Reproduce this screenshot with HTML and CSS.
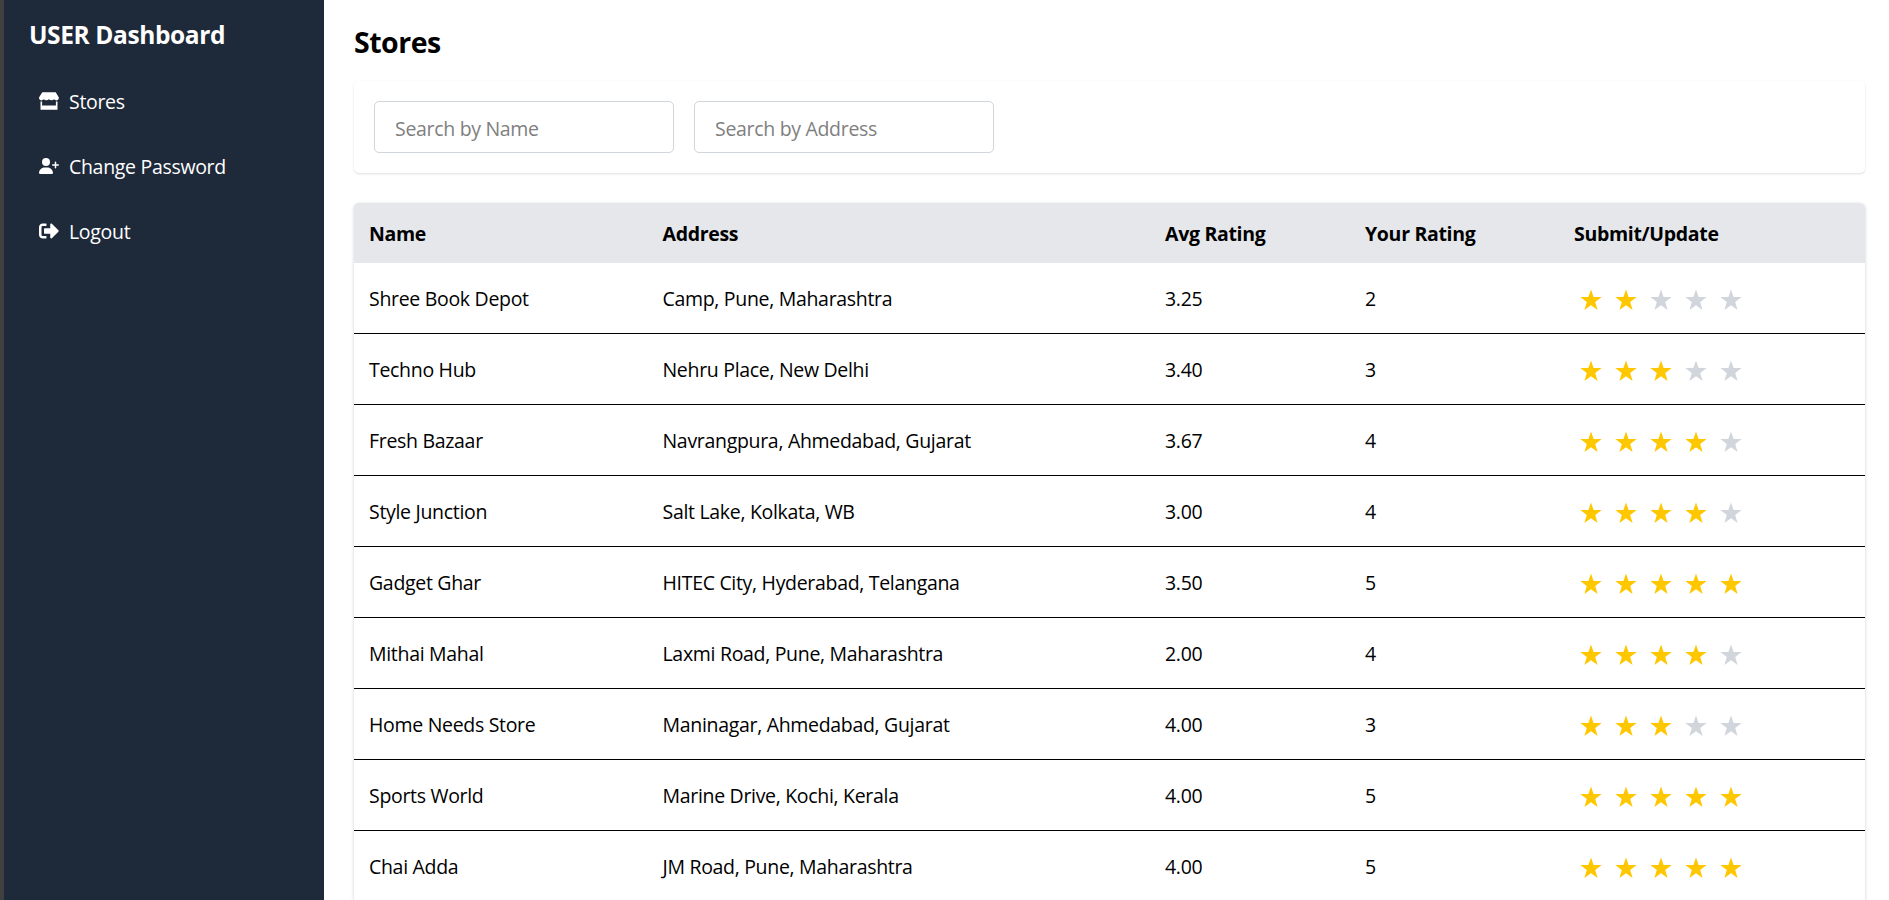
FILE: index.html
```html
<!DOCTYPE html>
<html lang="en">
<head>
<meta charset="utf-8">
<title>Stores</title>
<link rel="stylesheet" href="styles.css">
</head>
<body>
<div class="layout">
  <aside class="sidebar">
    <h2 class="brand">USER Dashboard</h2>
    <nav class="nav">
      <a class="nav-item"><svg class="icon" viewBox="0 0 20 20"><path d="M3.300 1.300h13.400l2.900 4.600c.7 1.600-.1 3.300-1.900 3.500-1.100 0-2-.5-2.600-1.200-1.200 1.500-3.900 1.500-5.200 0-1.300 1.500-4 1.500-5.200 0-.6.7-1.500 1.200-2.600 1.200C.4 9.200-.4 7.500.3 5.900zM1.500 10.500h1.600v4h13.800v-4h1.600v8.200h-17z"/></svg><span>Stores</span></a>
      <a class="nav-item"><svg class="icon" viewBox="0 0 640 512"><path d="M224 256A128 128 0 1 0 224 0a128 128 0 0 0 0 256zm-45.700 48C79.800 304 0 383.800 0 482.300 0 498.700 13.300 512 29.700 512h388.600c16.400 0 29.700-13.300 29.700-29.700C448 383.800 368.200 304 269.700 304zM504 312v-64h-64a24 24 0 0 1 0-48h64v-64a24 24 0 0 1 48 0v64h64a24 24 0 0 1 0 48h-64v64a24 24 0 0 1-48 0z"/></svg><span>Change Password</span></a>
      <a class="nav-item"><svg class="icon" viewBox="0 0 512 512"><path d="M497 273L329 441c-15 15-41 4.500-41-17v-96H152c-13.300 0-24-10.700-24-24v-96c0-13.300 10.700-24 24-24h136V88c0-21.400 25.900-32 41-17l168 168c9.300 9.400 9.300 24.600 0 34zM192 436v-40c0-6.600-5.400-12-12-12H96c-17.700 0-32-14.300-32-32V160c0-17.700 14.300-32 32-32h84c6.600 0 12-5.400 12-12V76c0-6.600-5.400-12-12-12H96c-53 0-96 43-96 96v192c0 53 43 96 96 96h84c6.600 0 12-5.400 12-12z"/></svg><span>Logout</span></a>
    </nav>
  </aside>
  <main class="main">
    <h1 class="title">Stores</h1>
    <div class="filters">
      <input class="field" placeholder="Search by Name">
      <input class="field" placeholder="Search by Address">
    </div>
    <div class="table">
      <div class="row head"><div>Name</div><div>Address</div><div>Avg Rating</div><div>Your Rating</div><div>Submit/Update</div></div>
      <div id="rows"></div>
    </div>
  </main>
</div>
<script src="app.js"></script>
</body>
</html>
```
FILE: styles.css
```css
* { box-sizing: border-box; }
body { margin: 0; height: 100vh; overflow: hidden; background: #fff; color: #000; font-family: "Open Sans", "Noto Sans", sans-serif; font-size: 19.5px; line-height: 30px; letter-spacing: -0.31px; }
.layout { display: flex; height: 100vh; border-left: 4px solid #404040; }
.sidebar { width: 320px; flex: none; background: #1e2939; color: #fff; padding: 20px 25px; }
.brand { margin: 0 0 26px; font-size: 24.5px; line-height: 30px; font-weight: 700; letter-spacing: -0.4px; }
.nav { display: flex; flex-direction: column; gap: 15px; }
.nav-item { display: flex; align-items: center; gap: 10px; height: 50px; padding: 0 10px; }
.nav-item span { padding-top: 2px; }
.icon { width: 20px; height: 20px; fill: #fff; flex: none; }
.main { flex: 1; display: flex; flex-direction: column; padding: 24px 24px 0 30px; overflow: hidden; }
.title { margin: 0 0 21px; font-size: 28.5px; line-height: 36px; font-weight: 700; letter-spacing: -0.5px; }
.filters { display: flex; flex: none; gap: 20px; height: 92px; padding: 20px; border-radius: 5px; box-shadow: 0 1px 3px rgba(0,0,0,.1), 0 1px 2px -1px rgba(0,0,0,.1); }
.field { width: 300px; height: 52px; padding: 2px 20px 0; border: 1px solid #d1d5dc; border-radius: 5px; font: inherit; letter-spacing: inherit; background: #fff; }
.field::placeholder { color: #808080; opacity: 1; }
.table { flex: 1; min-height: 0; margin-top: 30px; border-radius: 5px 5px 0 0; overflow: hidden; box-shadow: 0 1px 4px rgba(0,0,0,.1), 0 1px 3px rgba(0,0,0,.1); }
.row { display: grid; grid-template-columns: 293.5px 502.5px 200px 209px 1fr; align-items: center; height: 71px; border-bottom: 1px solid #000; }
.row:last-child { height: 70px; border: 0; }
.row > div { padding: 2px 15px 0; white-space: nowrap; }
.row.head { height: 60px; border: 0; background: #e5e7eb; font-weight: 700; }
.row > .stars { display: flex; gap: 13px; padding: 3px 0 0 21px; }
.star { width: 22px; height: 22px; fill: #d1d5dc; }
.star.on { fill: #ffc700; }
```
FILE: app.js
```
const stores = [
  ["Shree Book Depot", "Camp, Pune, Maharashtra", "3.25", 2],
  ["Techno Hub", "Nehru Place, New Delhi", "3.40", 3],
  ["Fresh Bazaar", "Navrangpura, Ahmedabad, Gujarat", "3.67", 4],
  ["Style Junction", "Salt Lake, Kolkata, WB", "3.00", 4],
  ["Gadget Ghar", "HITEC City, Hyderabad, Telangana", "3.50", 5],
  ["Mithai Mahal", "Laxmi Road, Pune, Maharashtra", "2.00", 4],
  ["Home Needs Store", "Maninagar, Ahmedabad, Gujarat", "4.00", 3],
  ["Sports World", "Marine Drive, Kochi, Kerala", "4.00", 5],
  ["Chai Adda", "JM Road, Pune, Maharashtra", "4.00", 5]
];
const star = on => `<svg class="star${on ? " on" : ""}" viewBox="0 0 22 22"><path d="M11 .5l2.600 7.600h8.100l-6.500 4.900 2.400 8-6.600-4.800-6.600 4.800 2.400-8L.3 8.100h8.100z"/></svg>`;
document.getElementById("rows").innerHTML = stores.map(([name, address, avg, mine]) =>
  `<div class="row"><div>${name}</div><div>${address}</div><div>${avg}</div><div>${mine}</div><div class="stars">${[1,2,3,4,5].map(n => star(n <= mine)).join("")}</div></div>`
).join("");
```
